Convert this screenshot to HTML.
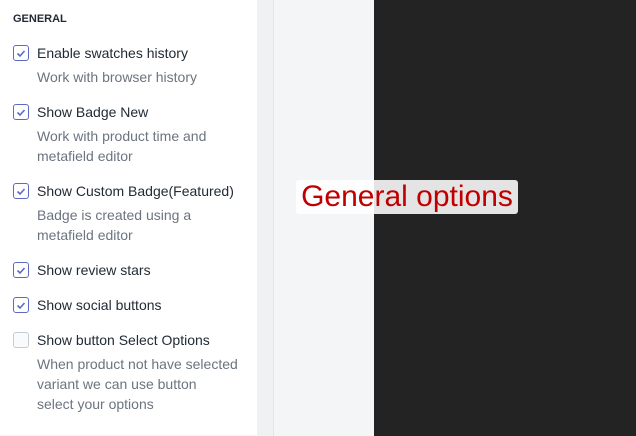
<!DOCTYPE html><html><head><style>
body{margin:0;width:636px;height:436px;position:relative;overflow:hidden;background:#f4f5f7;font-family:"Liberation Sans",Arial,sans-serif}
.l{position:absolute;left:0;top:0;width:257px;height:435px;background:#fff}
.g{position:absolute;left:257px;top:0;width:16px;height:436px;background:#f0f1f3;border-right:1px solid #e3e4e7}
.d{position:absolute;left:374px;top:0;width:262px;height:436px;background:#232323}
.t{position:absolute;left:37px;font-size:14px;color:#212b36;white-space:nowrap;line-height:20px}
.s{position:absolute;left:37px;font-size:14px;color:#6b7480;line-height:20px;white-space:nowrap}
.c{position:absolute;left:13px;width:14px;height:14px;border:1px solid #5c6ac4;border-radius:3px;background:#fff}
.c svg{position:absolute;left:2px;top:2px}
.u{border-color:#c4cdd5;background:#f9fafb}
</style></head><body>
<div class="l"></div><div class="g"></div><div class="d"></div>
<div style="position:absolute;left:13px;top:13px;font-size:11px;font-weight:bold;color:#212b36">GENERAL</div>
<div class="c" style="top:45px"><svg width="10" height="10"><path d="M1.5 5.5l2.5 2.5 4.5-5" stroke="#5c6ac4" stroke-width="1.6" fill="none"/></svg></div>
<div class="t" style="top:43px">Enable swatches history</div>
<div class="s" style="top:67px">Work with browser history</div>
<div class="c" style="top:104px"><svg width="10" height="10"><path d="M1.5 5.5l2.5 2.5 4.5-5" stroke="#5c6ac4" stroke-width="1.6" fill="none"/></svg></div>
<div class="t" style="top:102px">Show Badge New</div>
<div class="s" style="top:126px">Work with product time and<br>metafield editor</div>
<div class="c" style="top:183px"><svg width="10" height="10"><path d="M1.5 5.5l2.5 2.5 4.5-5" stroke="#5c6ac4" stroke-width="1.6" fill="none"/></svg></div>
<div class="t" style="top:181px">Show Custom Badge(Featured)</div>
<div class="s" style="top:205px">Badge is created using a<br>metafield editor</div>
<div class="c" style="top:262px"><svg width="10" height="10"><path d="M1.5 5.5l2.5 2.5 4.5-5" stroke="#5c6ac4" stroke-width="1.6" fill="none"/></svg></div>
<div class="t" style="top:260px">Show review stars</div>
<div class="c" style="top:297px"><svg width="10" height="10"><path d="M1.5 5.5l2.5 2.5 4.5-5" stroke="#5c6ac4" stroke-width="1.6" fill="none"/></svg></div>
<div class="t" style="top:295px">Show social buttons</div>
<div class="c u" style="top:332px"></div>
<div class="t" style="top:330px">Show button Select Options</div>
<div class="s" style="top:354px">When product not have selected<br>variant we can use button<br>select your options</div>
<div style="position:absolute;left:296px;top:180px;width:222px;height:34px;background:rgba(255,255,255,.88);border-radius:3px;color:#c00000;font-size:30px;line-height:34px;text-align:center;white-space:nowrap">General options</div>
</body></html>
